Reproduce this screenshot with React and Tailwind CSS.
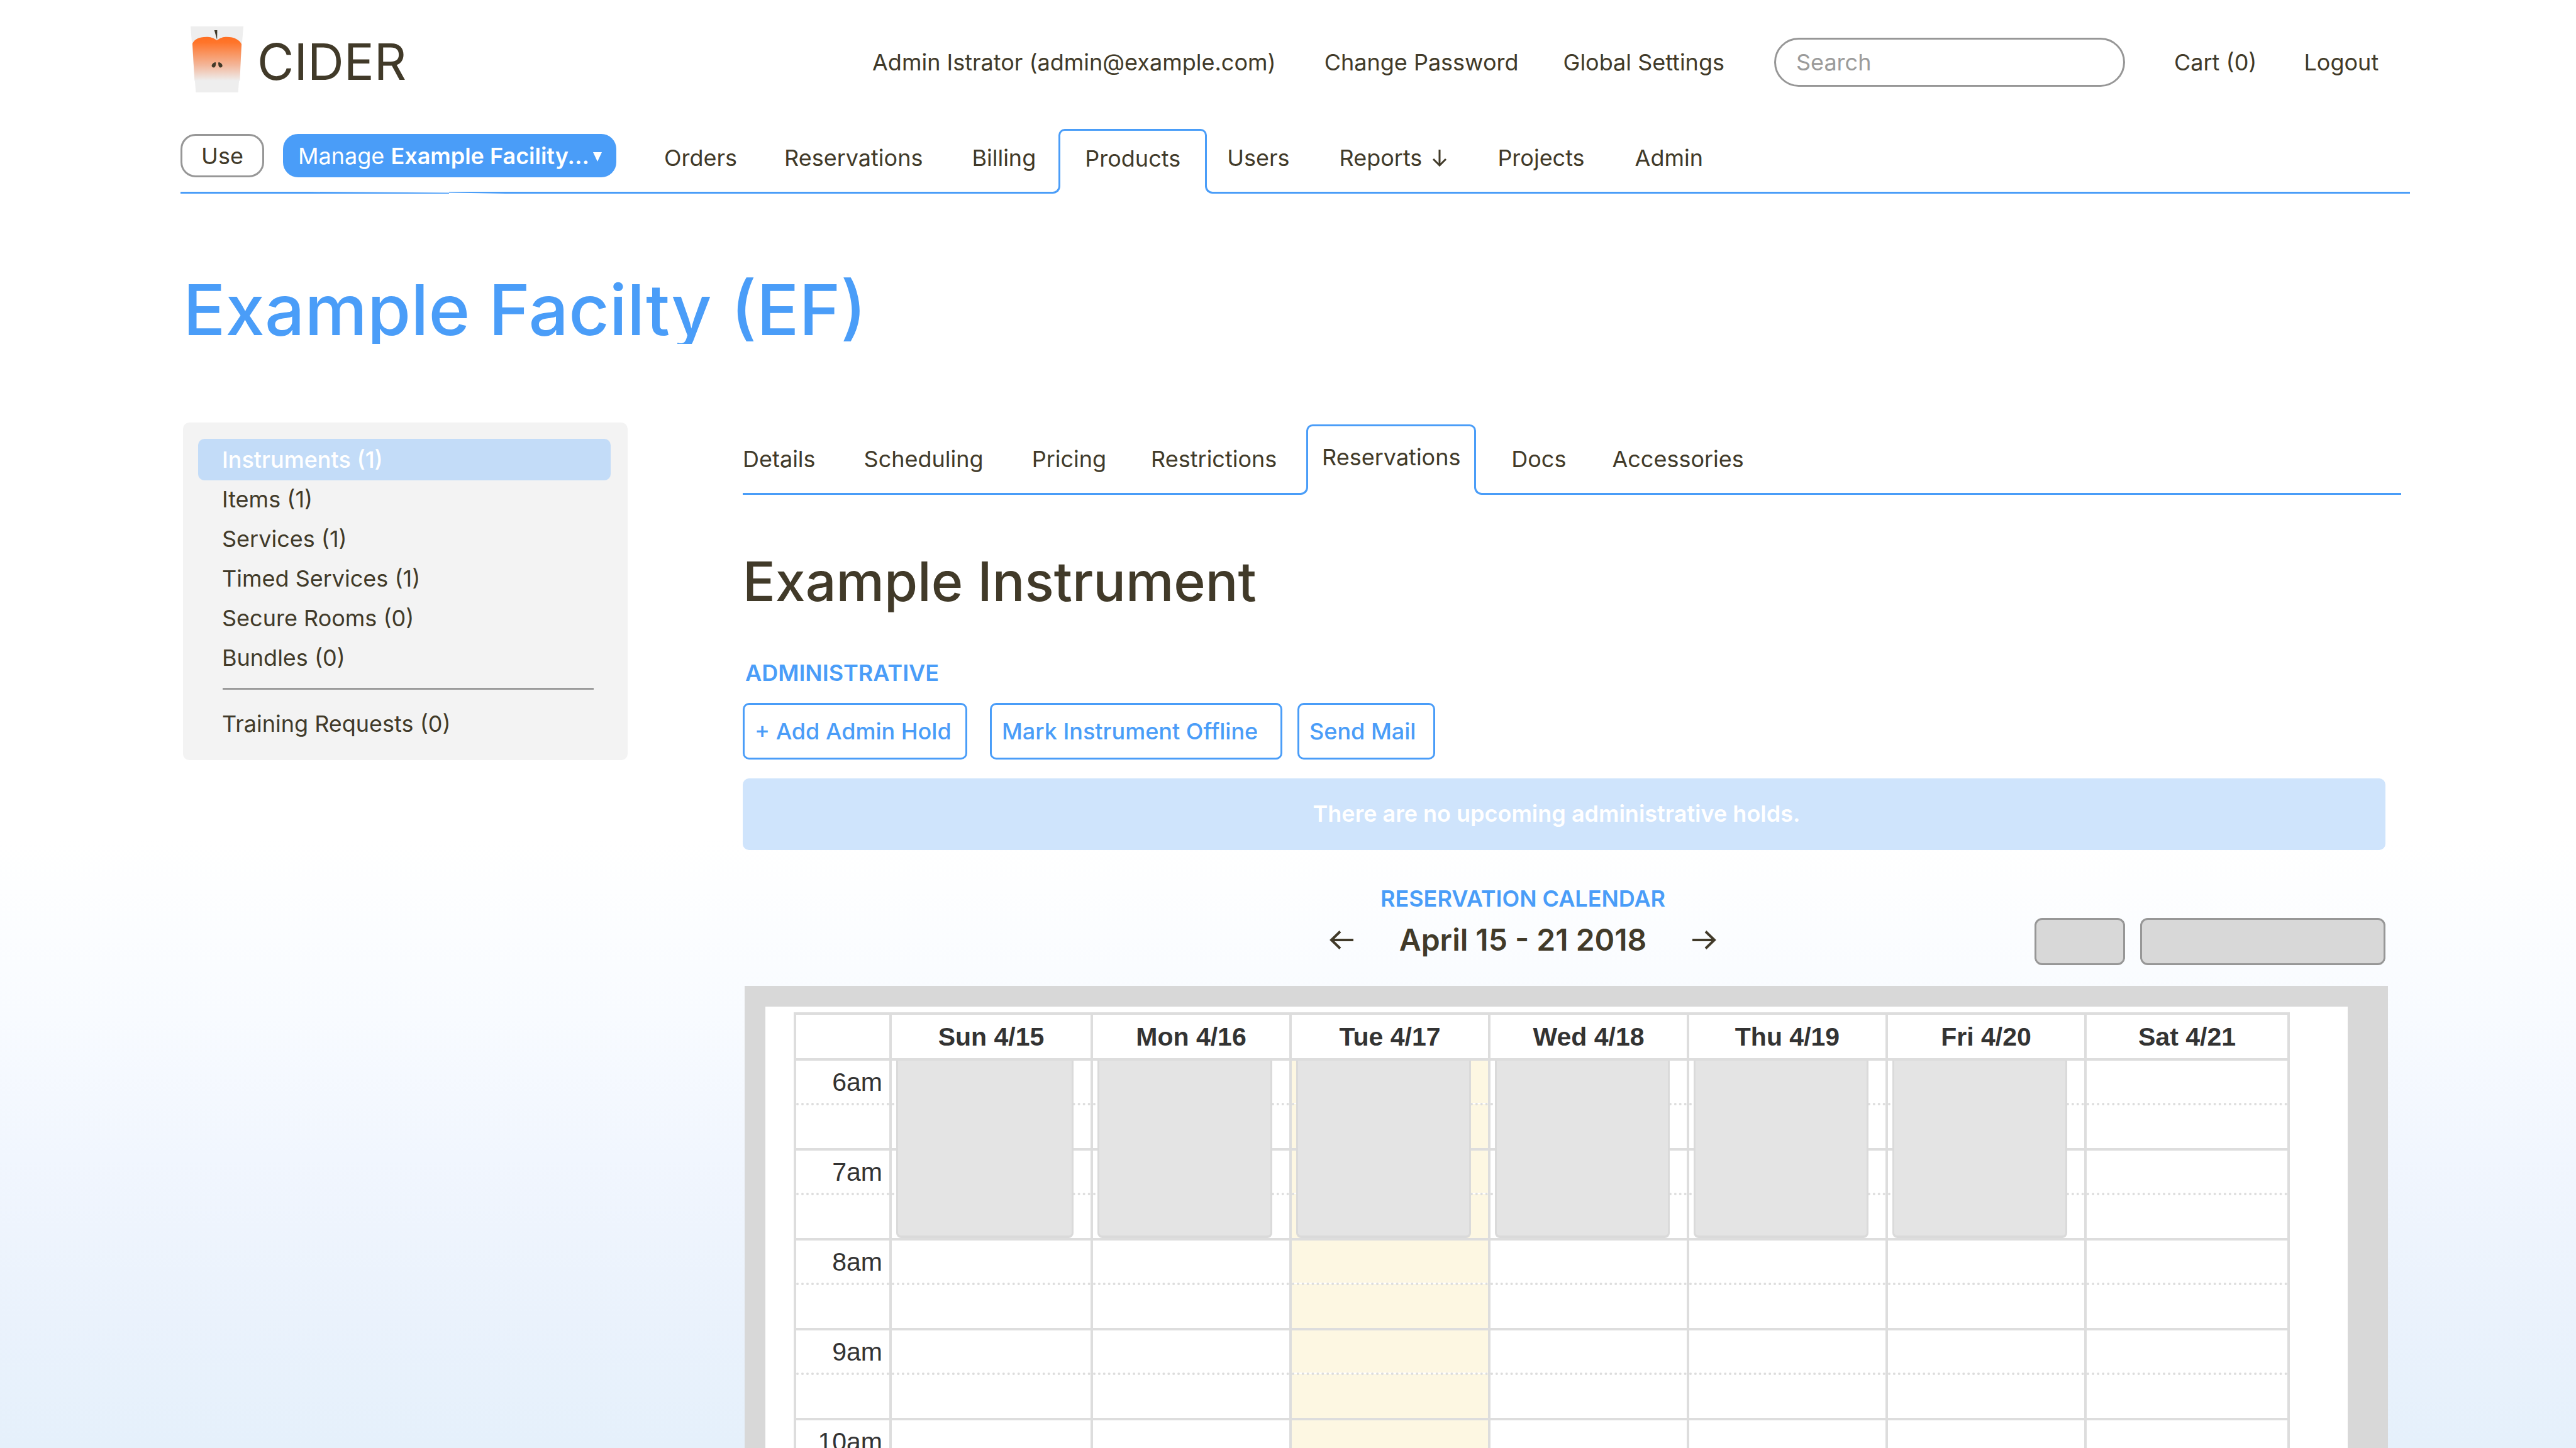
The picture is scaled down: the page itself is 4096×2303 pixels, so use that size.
const topLinks = [
  { label: "Admin Istrator (admin@example.com)", cls: "ml-[728px]" },
  { label: "Change Password", cls: "ml-[77px]" },
  { label: "Global Settings", cls: "ml-[71px]" },
];

const mainNav = [
  { label: "Orders", cls: "ml-[76px]" },
  { label: "Reservations", cls: "ml-[75px]" },
  { label: "Billing", cls: "ml-[78px] mr-[36px]" },
  { label: "Products", active: true, cls: "w-[236px]" },
  { label: "Users", cls: "ml-[32px]" },
  { label: "Reports", arrow: true, cls: "ml-[79px]" },
  { label: "Projects", cls: "ml-[80px]" },
  { label: "Admin", cls: "ml-[80px]" },
];

const subNav = [
  { label: "Details", cls: "" },
  { label: "Scheduling", cls: "ml-[77px]" },
  { label: "Pricing", cls: "ml-[77px]" },
  { label: "Restrictions", cls: "ml-[71px] mr-[47px]" },
  { label: "Reservations", active: true, cls: "w-[270px]" },
  { label: "Docs", cls: "ml-[56px]" },
  { label: "Accessories", cls: "ml-[73px]" },
];

const sideItems = [
  "Instruments (1)",
  "Items (1)",
  "Services (1)",
  "Timed Services (1)",
  "Secure Rooms (0)",
  "Bundles (0)",
];

const days = [
  { label: "Sun 4/15", busy: true },
  { label: "Mon 4/16", busy: true },
  { label: "Tue 4/17", busy: true, today: true },
  { label: "Wed 4/18", busy: true },
  { label: "Thu 4/19", busy: true },
  { label: "Fri 4/20", busy: true },
  { label: "Sat 4/21" },
];

const hours = ["6am", "7am", "8am", "9am", "10am"];

function Logo() {
  return (
    <svg viewBox="0 0 140 175" className="h-[105px] w-[84px]" aria-hidden="true">
      <defs>
        <linearGradient id="juice" gradientUnits="userSpaceOnUse" x1="0" y1="28" x2="0" y2="144">
          <stop offset="0" stopColor="#ff6f22" />
          <stop offset="0.12" stopColor="#ff7429" />
          <stop offset="0.65" stopColor="#f3b79b" />
          <stop offset="1" stopColor="#eeeeee" />
        </linearGradient>
      </defs>
      <path d="M0 0H140L126 175H14Z" fill="#eeeeee" />
      <path
        d="M5 46C10 34 22 28 42 28C53 28 60 30 70 37C79 30 86 28 96 28C116 28 130 36 135 47L130.500 144H10.500Z"
        fill="url(#juice)"
      />
      <path d="M63 10H70.700L70.300 36Z" fill="#413a29" />
      <path d="M65 95C59 97 56 101 56 104C56 107 59 109 62 109C66 108 67 103 67 97C67 95.500 66 95 65 95Z" fill="#413a29" />
      <path d="M75.500 95C81.500 97 84.500 101 84.500 104C84.500 107 81.500 109 78.500 109C74.500 108 73.500 103 73.500 97C73.500 95.500 74.500 95 75.500 95Z" fill="#413a29" />
    </svg>
  );
}

function ActiveTab({ item }) {
  return (
    <a href="#" aria-current="page" className={"relative block h-full shrink-0 " + item.cls}>
      <span className="flex h-[calc(100%-12px)] items-center justify-center rounded-t-[10px] border-3 border-b-0 border-[#4a9df8]">
        {item.label}
      </span>
      <span className="absolute bottom-0 right-full -mr-[3px] h-[12px] w-[12px] rounded-br-[12px] border-b-3 border-r-3 border-[#4a9df8]" />
      <span className="absolute bottom-0 left-full -ml-[3px] h-[12px] w-[12px] rounded-bl-[12px] border-b-3 border-l-3 border-[#4a9df8]" />
    </a>
  );
}

function TabBar({ items, start, label, linkClass }) {
  const at = items.findIndex((i) => i.active);
  const link = (i) => (
    <a
      key={i.label}
      href="#"
      className={"flex shrink-0 items-center whitespace-nowrap " + linkClass + " " + i.cls}
    >
      {i.label}
      {i.arrow && (
        <svg viewBox="0 0 24 27" className="ml-[16px] h-[27px] w-[24px]" fill="none" stroke="currentColor" strokeWidth="3">
          <path d="M12 0V25M2 15L12 25L22 15" />
        </svg>
      )}
    </a>
  );
  return (
    <nav aria-label={label} className="flex h-full w-full">
      <div className="relative mr-[9px] flex border-b-3 border-[#4a9df8]">
        {start}
        <div className="-mr-[9px] flex">{items.slice(0, at).map(link)}</div>
      </div>
      <ActiveTab item={items[at]} />
      <div className="ml-[9px] flex grow border-b-3 border-[#4a9df8]">
        <div className="-ml-[9px] flex">{items.slice(at + 1).map(link)}</div>
      </div>
    </nav>
  );
}

function ArrowIcon({ right }) {
  return (
    <svg viewBox="0 0 38 30" className="h-[30px] w-[38px]" fill="none" stroke="currentColor" strokeWidth="4">
      {right ? <path d="M0 15H35M21 1.500L35 15L21 28.500" /> : <path d="M38 15H3M17 1.500L3 15L17 28.500" />}
    </svg>
  );
}

function Calendar() {
  return (
    <div className="mr-[-4px] ml-[3px] mt-[33px] bg-[#d8d8d8] pl-[33px] pr-[64px] pt-[33px]">
      <div className="bg-white pb-[40px] pl-[45px] pr-[92px] pt-[9px]">
        <table className="w-full table-fixed border-collapse font-['Liberation_Sans',Arial,sans-serif] text-[41px] leading-[44px] text-[#333333]">
          <colgroup>
            <col className="w-[152px]" />
            <col className="w-[320px]" />
            <col />
            <col />
            <col />
            <col />
            <col />
            <col className="w-[323px]" />
          </colgroup>
          <thead>
            <tr className="h-[73px]">
              <th className="border-4 border-[#dddddd]" />
              {days.map((d) => (
                <th key={d.label} scope="col" className="border-4 border-[#dddddd] p-0 font-bold">
                  {d.label}
                </th>
              ))}
            </tr>
          </thead>
          <tbody>
            {hours.flatMap((h, n) => [
              <tr key={h} className="h-[71px]">
                <th scope="row" className="border-4 border-b-0 border-[#dddddd] p-0 pr-[11px] text-right font-normal">
                  {h}
                </th>
                {days.map((d) => (
                  <td
                    key={d.label}
                    className={
                      "relative border-4 border-b-0 border-[#dddddd] p-0 " + (d.today ? "bg-[#fdf7e2]" : "")
                    }
                  >
                    {n === 0 && d.busy && (
                      <div className="absolute left-[7px] right-[27px] top-0 z-10 h-[282px] rounded-b-[8px] border-3 border-b-4 border-t-0 border-[#dadada] bg-[#e4e4e4]" />
                    )}
                  </td>
                ))}
              </tr>,
              <tr key={h + "-half"} className="h-[72px]">
                <th className="border-x-4 border-t-4 border-[#dddddd] [border-top-style:dotted]" />
                {days.map((d) => (
                  <td
                    key={d.label}
                    className={
                      "border-x-4 border-t-4 border-[#dddddd] [border-top-style:dotted] " +
                      (d.today ? "bg-[#fdf7e2]" : "")
                    }
                  />
                ))}
              </tr>,
            ])}
          </tbody>
        </table>
      </div>
    </div>
  );
}

export default function App() {
  return (
    <div className="h-screen w-full overflow-hidden bg-[linear-gradient(to_bottom,#ffffff_58%,#f8fbff_70%,#f1f6fe_80%,#eaf2fc_91%,#e5f0fb_100%)] font-['Inter',sans-serif] text-[36px] leading-[44px] text-[#413a29]">
      <header className="pl-[287px] pr-[264px] pt-[42px]">
        <div className="flex h-[105px] items-center pl-[16px]">
          <a href="#" className="flex shrink-0 items-center gap-[22px] text-[80px] leading-[98px]">
            <Logo />
            <span className="w-[250px] pt-[6px]">CIDER</span>
          </a>
          <div className="flex grow items-center pt-[8px]">
            {topLinks.map((l) => (
              <a key={l.label} href="#" className={"whitespace-nowrap " + l.cls}>
                {l.label}
              </a>
            ))}
            <input
              type="search"
              aria-label="Search"
              placeholder="Search"
              className="ml-[79px] h-[78px] w-[558px] shrink-0 rounded-full border-3 border-[#979797] bg-white px-[32px] placeholder:text-[#9b9b9b]"
            />
            <a href="#" className="ml-[78px] whitespace-nowrap">
              Cart (0)
            </a>
            <a href="#" className="ml-[75px]">
              Logout
            </a>
          </div>
        </div>
        <div className="mt-[58px] h-[103px]">
          <TabBar
            label="Main"
            linkClass="pb-[8px]"
            items={mainNav}
            start={
              <div className="flex items-start gap-[30px] pt-[8px]">
                <button className="h-[69px] w-[133px] rounded-[24px] border-3 border-[#979797] bg-white">Use</button>
                <button className="flex h-[69px] w-[530px] items-center rounded-[24px] bg-[#4a9df8] pl-[24px] text-white">
                  <span className="whitespace-nowrap">
                    Manage <b className="font-semibold">Example Facility...</b>
                  </span>
                  <svg viewBox="0 0 14 15" className="ml-[6px] mt-[4px] h-[15px] w-[14px]" fill="currentColor">
                    <path d="M0 0H14L7 15Z" />
                  </svg>
                </button>
                <svg
                  viewBox="0 0 313 3"
                  className="absolute -bottom-[3px] left-[204px] h-[3px] w-[313px]"
                  fill="#ffffff"
                  aria-hidden="true"
                >
                  <path d="M0 0H223V1.600ZM223 1.400L313 3H223Z" />
                </svg>
              </div>
            }
          />
        </div>
      </header>

      <h1 className="mt-[114px] h-[125px] overflow-hidden pl-[291px] text-[112px] leading-[140px] font-medium text-[#4a9df8]">
        Example Facilty (EF)
      </h1>

      <div className="flex items-start pl-[291px] pr-[303px] pt-[125px]">
        <aside className="w-[707px] shrink-0 rounded-[10px] bg-[#f3f3f3] pb-[36px] pl-[24px] pr-[27px] pt-[26px]">
          <ul>
            {sideItems.map((s, i) => (
              <li key={s}>
                <a
                  href="#"
                  className={
                    "block rounded-[10px] pl-[38px] " +
                    (i === 0 ? "h-[66px] bg-[#c3dcf8] pt-[11px] font-medium text-white" : "h-[63px] pt-[8px]")
                  }
                >
                  {s}
                </a>
              </li>
            ))}
          </ul>
          <hr className="ml-[39px] mr-[27px] mt-[15px] border-t-3 border-[#9b9b9b]" />
          <a href="#" className="mt-[32px] block pl-[38px]">
            Training Requests (0)
          </a>
        </aside>

        <main className="ml-[183px] min-w-0 grow pt-[3px]">
          <div className="mr-[-25px] h-[112px]">
            <TabBar label="Instrument" linkClass="" items={subNav} />
          </div>

          <h2 className="mt-[85px] text-[86px] leading-[106px] font-medium">Example Instrument</h2>

          <h3 className="mt-[70px] pl-[4px] font-semibold text-[#4a9df8]">ADMINISTRATIVE</h3>
          <div className="mt-[26px] flex font-medium text-[#4a9df8]">
            <button className="h-[90px] w-[357px] rounded-[10px] border-3 border-[#4a9df8] bg-white pl-[16px] text-left whitespace-nowrap">
              + Add Admin Hold
            </button>
            <button className="ml-[36px] h-[90px] w-[465px] rounded-[10px] border-3 border-[#4a9df8] bg-white pl-[16px] text-left whitespace-nowrap">
              Mark Instrument Offline
            </button>
            <button className="ml-[24px] h-[90px] w-[219px] rounded-[10px] border-3 border-[#4a9df8] bg-white pl-[16px] text-left whitespace-nowrap">
              Send Mail
            </button>
          </div>
          <p className="mt-[30px] h-[114px] rounded-[10px] bg-[#cfe4fc] pr-[24px] pt-[34px] text-center font-semibold text-white">
            There are no upcoming administrative holds.
          </p>

          <div className="mt-[55px] flex items-end pl-[558px]">
            <div className="flex grow justify-center pr-[131px]">
              <div className="flex flex-col items-center pb-[11px]">
                <h3 className="font-semibold text-[#4a9df8]">RESERVATION CALENDAR</h3>
                <div className="mt-[15px] flex items-center text-[48px] leading-[58px] font-semibold">
                  <button aria-label="Previous week">
                    <ArrowIcon />
                  </button>
                  <span className="mx-[73px] whitespace-nowrap">April 15 - 21 2018</span>
                  <button aria-label="Next week">
                    <ArrowIcon right />
                  </button>
                </div>
              </div>
            </div>
            <div className="flex gap-[24px]">
              <button aria-label="Today" className="h-[75px] w-[144px] rounded-[12px] border-3 border-[#979797] bg-[#d8d8d8]" />
              <button aria-label="View" className="h-[75px] w-[390px] rounded-[12px] border-3 border-[#979797] bg-[#d8d8d8]" />
            </div>
          </div>

          <Calendar />
        </main>
      </div>
    </div>
  );
}
